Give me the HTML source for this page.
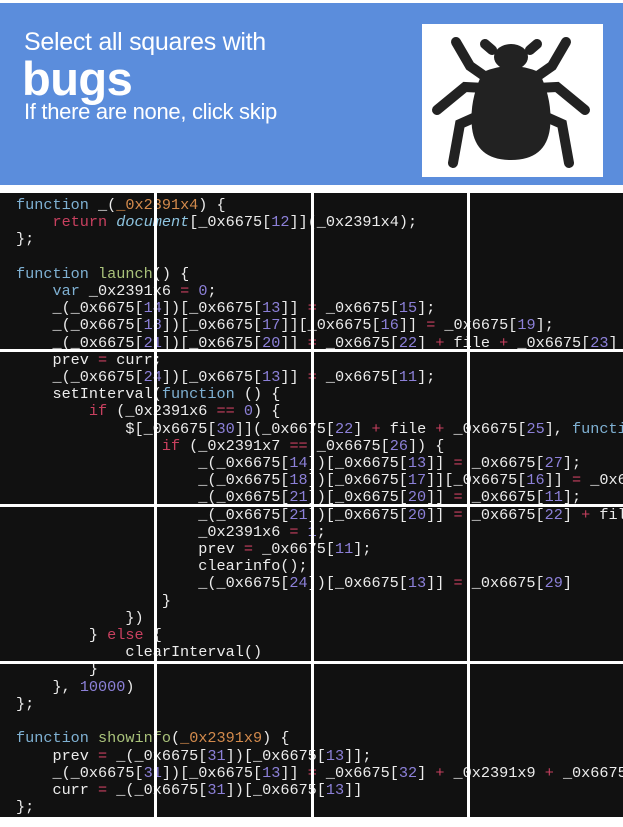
<!DOCTYPE html>
<html><head><meta charset="utf-8">
<style>
html,body{margin:0;padding:0;background:#fff;width:623px;height:827px;overflow:hidden;position:relative;font-family:"Liberation Sans",sans-serif}
#hdr{position:absolute;left:0;top:3px;width:623px;height:182px;background:#5b8ddc}
#hdr div{line-height:1}
#t1{position:absolute;left:24px;top:27px;color:#fff;font-size:25px;letter-spacing:-0.3px}
#t2{position:absolute;left:22px;top:52px;color:#fff;font-size:47px;font-weight:bold;letter-spacing:-0.5px}
#t3{position:absolute;left:24px;top:98px;color:#fff;font-size:22px;letter-spacing:-0.3px}
#box{position:absolute;left:422px;top:24px;width:181px;height:153px;background:#fff}
#code{position:absolute;left:0;top:193px;width:623px;height:624px;background:#111}
pre{position:absolute;left:16px;top:197px;margin:0;font-family:"Liberation Mono",monospace;font-size:15.2px;line-height:17.2px;color:#ececec;white-space:pre}
.k{color:#7fb1d3}.r{color:#c8405f}.p{color:#d38a4c}.f{color:#a9c27a}.n{color:#8c80d8}.o{color:#c8405f}.d{color:#8ec4e0;font-style:italic}
.v{position:absolute;top:193px;width:3px;height:624px;background:#fff}
.h{position:absolute;left:0;width:623px;height:3px;background:#fff}
</style></head><body>
<div id="hdr">
<div id="t1">Select all squares with</div>
<div id="t2">bugs</div>
<div id="t3">If there are none, click skip</div>
</div>
<div id="box"><svg width="181" height="153" viewBox="422 24 181 153">
<g stroke="#222" stroke-width="10" stroke-linecap="round" fill="none">
<polyline points="456,42 470,66 490,80"/><polyline points="566,42 552,66 532,80"/>
<polyline points="437,110 465,87 485,88"/><polyline points="585,110 557,87 537,88"/>
<polyline points="453,163 460,124 478,116"/><polyline points="569,163 562,124 544,116"/>
<polyline points="485,44 492,50"/><polyline points="537,44 530,50"/>
</g>
<ellipse cx="511" cy="57" rx="17" ry="13" fill="#222"/>
<path d="M483,72 Q511,60 539,72 Q553,100 550,128 Q546,160 511,160 Q476,160 472,128 Q469,100 483,72Z" fill="#222"/>
</svg></div>
<div id="code"></div>
<pre><span class="k">function</span> _(<span class="p">_0x2391x4</span>) {
    <span class="r">return</span> <span class="d">document</span>[_0x6675[<span class="n">12</span>]](_0x2391x4);
};

<span class="k">function</span> <span class="f">launch</span>() {
    <span class="k">var</span> _0x2391x6 <span class="o">=</span> <span class="n">0</span>;
    _(_0x6675[<span class="n">14</span>])[_0x6675[<span class="n">13</span>]] <span class="o">=</span> _0x6675[<span class="n">15</span>];
    _(_0x6675[<span class="n">18</span>])[_0x6675[<span class="n">17</span>]][_0x6675[<span class="n">16</span>]] <span class="o">=</span> _0x6675[<span class="n">19</span>];
    _(_0x6675[<span class="n">21</span>])[_0x6675[<span class="n">20</span>]] <span class="o">=</span> _0x6675[<span class="n">22</span>] <span class="o">+</span> file <span class="o">+</span> _0x6675[<span class="n">23</span>]
    prev <span class="o">=</span> curr;
    _(_0x6675[<span class="n">24</span>])[_0x6675[<span class="n">13</span>]] <span class="o">=</span> _0x6675[<span class="n">11</span>];
    setInterval(<span class="k">function</span> () {
        <span class="r">if</span> (_0x2391x6 <span class="o">==</span> <span class="n">0</span>) {
            $[_0x6675[<span class="n">30</span>]](_0x6675[<span class="n">22</span>] <span class="o">+</span> file <span class="o">+</span> _0x6675[<span class="n">25</span>], <span class="k">functi</span>
                <span class="r">if</span> (_0x2391x7 <span class="o">==</span> _0x6675[<span class="n">26</span>]) {
                    _(_0x6675[<span class="n">14</span>])[_0x6675[<span class="n">13</span>]] <span class="o">=</span> _0x6675[<span class="n">27</span>];
                    _(_0x6675[<span class="n">18</span>])[_0x6675[<span class="n">17</span>]][_0x6675[<span class="n">16</span>]] <span class="o">=</span> _0x6
                    _(_0x6675[<span class="n">21</span>])[_0x6675[<span class="n">20</span>]] <span class="o">=</span> _0x6675[<span class="n">11</span>];
                    _(_0x6675[<span class="n">21</span>])[_0x6675[<span class="n">20</span>]] <span class="o">=</span> _0x6675[<span class="n">22</span>] <span class="o">+</span> fil
                    _0x2391x6 <span class="o">=</span> <span class="n">1</span>;
                    prev <span class="o">=</span> _0x6675[<span class="n">11</span>];
                    clearinfo();
                    _(_0x6675[<span class="n">24</span>])[_0x6675[<span class="n">13</span>]] <span class="o">=</span> _0x6675[<span class="n">29</span>]
                }
            })
        } <span class="r">else</span> {
            clearInterval()
        }
    }, <span class="n">10000</span>)
};

<span class="k">function</span> <span class="f">showinfo</span>(<span class="p">_0x2391x9</span>) {
    prev <span class="o">=</span> _(_0x6675[<span class="n">31</span>])[_0x6675[<span class="n">13</span>]];
    _(_0x6675[<span class="n">31</span>])[_0x6675[<span class="n">13</span>]] <span class="o">=</span> _0x6675[<span class="n">32</span>] <span class="o">+</span> _0x2391x9 <span class="o">+</span> _0x6675
    curr <span class="o">=</span> _(_0x6675[<span class="n">31</span>])[_0x6675[<span class="n">13</span>]]
};</pre>
<div class="v" style="left:154px"></div>
<div class="v" style="left:311px"></div>
<div class="v" style="left:467px"></div>
<div class="h" style="top:349px"></div>
<div class="h" style="top:504px"></div>
<div class="h" style="top:661px"></div>
</body></html>
